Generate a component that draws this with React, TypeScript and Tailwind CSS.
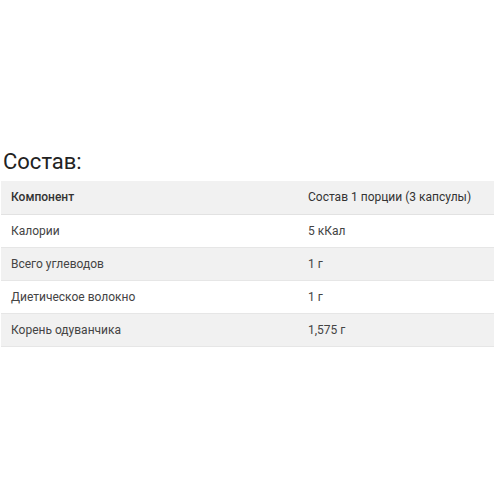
export default function App() {
  const rows = [
    ["Калории", "5 кКал"],
    ["Всего углеводов", "1 г"],
    ["Диетическое волокно", "1 г"],
    ["Корень одуванчика", "1,575 г"],
  ];
  return (
    <div className="w-[500px] h-[500px] bg-white pt-[147px] pl-[1px] pr-[6px]" style={{ fontFamily: "Roboto, 'Liberation Sans', sans-serif" }}>
      <h2 className="text-[22px] leading-[30px] text-[#222] pl-[2px] mb-[4px]">Состав:</h2>
      <table className="w-full border-collapse text-[12px]">
        <thead>
          <tr className="bg-[#f1f1f1] h-[33px] border-b border-[#e2e2e2]">
            <th className="text-left font-medium text-[#333] pl-[10px] w-[297px]">Компонент</th>
            <th className="text-left font-normal text-[#333] pl-[10px]">Состав 1 порции (3 капсулы)</th>
          </tr>
        </thead>
        <tbody>
          {rows.map((r, i) => (
            <tr key={i} className={`h-[33px] border-b border-[#e6e6e6] ${i % 2 === 1 ? "bg-[#f1f1f1]" : "bg-white"}`}>
              <td className="pl-[10px] text-[#444]">{r[0]}</td>
              <td className="pl-[10px] text-[#444]">{r[1]}</td>
            </tr>
          ))}
        </tbody>
      </table>
    </div>
  );
}
